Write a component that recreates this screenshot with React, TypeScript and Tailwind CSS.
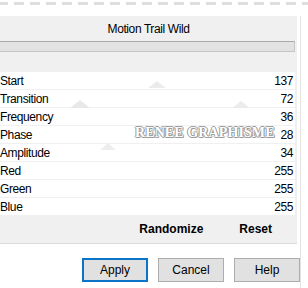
import React from "react";

const rows = [
  { label: "Start", value: 137 },
  { label: "Transition", value: 72 },
  { label: "Frequency", value: 36 },
  { label: "Phase", value: 28 },
  { label: "Amplitude", value: 34 },
  { label: "Red", value: 255 },
  { label: "Green", value: 255 },
  { label: "Blue", value: 255 },
];

export default function App() {
  return (
    <div className="relative w-[308px] h-[288px] bg-white overflow-hidden font-['Liberation_Sans',Arial,sans-serif] text-[12px] text-black tracking-[-0.4px]">
      {/* dashed top edge */}
      <div className="h-4 flex gap-[6px] pt-[2px] -ml-[2px]">
        {Array.from({ length: 20 }).map((_, i) => (
          <span key={i} className="block w-[10px] h-[3px] bg-[#dedede] shrink-0" />
        ))}
      </div>

      <div className="flex">
        {/* main panel */}
        <div className="w-[297px] h-[228px] bg-[#f0f0f0] border-b border-[#dadada] flex flex-col">
          <div className="h-[25px] flex items-center justify-center pt-[1px]">Motion Trail Wild</div>
          <div className="w-[295px] h-[11px] bg-[#e2e2e2] border-t border-b border-r border-t-[#a9a9a9] border-b-[#c6c6c6] border-r-[#c6c6c6]" />

          <div className="mt-[20px] w-[295px] flex flex-col gap-[1px]">
            {rows.map((r) => (
              <div key={r.label} className="h-[17px] bg-white flex items-center justify-between pr-[2px] leading-none">
                <span>{r.label}</span>
                <span>{r.value}</span>
              </div>
            ))}
          </div>

          <div className="flex-1 flex items-center justify-end pr-[25px] gap-9 font-bold tracking-normal">
            <span>Randomize</span>
            <span>Reset</span>
          </div>
        </div>

        {/* right edge */}
        <div className="w-[3px]" />
        <div className="w-px h-[288px] bg-[#e3e3e3]" />
      </div>

      {/* dialog buttons */}
      <div className="absolute left-[82px] top-[258px] flex gap-[10px] tracking-normal">
        <button className="w-[66px] h-[24px] bg-[#e1e1e1] border-2 border-[#0a74c9] flex items-center justify-center">Apply</button>
        <button className="w-[66px] h-[24px] bg-[#e1e1e1] border border-[#adadad] flex items-center justify-center">Cancel</button>
        <button className="w-[66px] h-[24px] bg-[#e1e1e1] border border-[#adadad] flex items-center justify-center">Help</button>
      </div>

      {/* watermark */}
      <svg className="absolute left-0 top-0 pointer-events-none" width="308" height="288">
        <polygon points="70,108 80,100 90,108" fill="#e8e8e8" />
        <polygon points="148,88 157,81 166,88" fill="#ececec" />
        <polygon points="232,108 241,101 250,108" fill="#ececec" />
        <polygon points="100,150 108,143 116,150" fill="#ededed" />
      </svg>
      <div className="absolute left-[135px] top-[122px] font-['Liberation_Serif',serif] font-bold text-[14px] tracking-[0.1px] text-white [text-shadow:1px_0_0_#9a9a9a,-1px_0_0_#9a9a9a,0_1px_0_#9a9a9a,0_-1px_0_#9a9a9a,1px_1px_0_#b0b0b0]">
        RENEE GRAPHISME
      </div>
    </div>
  );
}
